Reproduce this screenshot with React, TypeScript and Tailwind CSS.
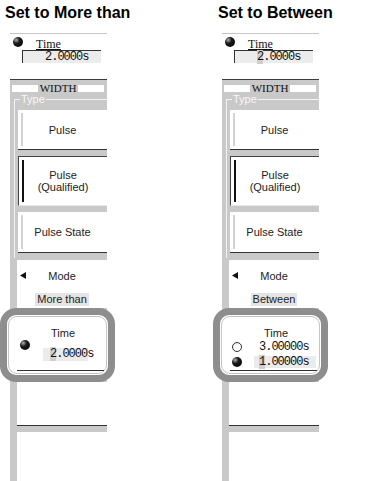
import React from "react";

type Side = "more" | "between";

const mono =
  "font-['Liberation_Mono',monospace] text-[12px] tracking-[-1px] text-[#111]";

function Knob({ className = "" }: { className?: string }) {
  return (
    <div
      className={
        "w-[10px] h-[10px] shrink-0 rounded-full bg-[radial-gradient(circle_at_32%_30%,#b0b0b0_0,#1a1a1a_35%,#000_100%)] " +
        className
      }
    />
  );
}

function Radio({ className = "" }: { className?: string }) {
  return (
    <div
      className={
        "w-[10px] h-[10px] shrink-0 rounded-full border border-[#333] bg-[radial-gradient(circle_at_60%_65%,#fff_0,#fff_45%,#d8d8d8_100%)] " +
        className
      }
    />
  );
}

function TypeButton({
  label,
  selected = false,
  h,
}: {
  label: React.ReactNode;
  selected?: boolean;
  h: string;
}) {
  return (
    <div
      className={
        "flex items-stretch bg-white " +
        h +
        (selected
          ? " border-t border-l border-[#444] border-b border-b-[#e8e8e8]"
          : " border-b border-[#333]")
      }
    >
      <div
        className={
          "ml-[3px] my-[3px] w-[2px] " + (selected ? "bg-[#111]" : "bg-[#d2d2d2]")
        }
      />
      <div className="flex-1 mr-[5px] flex items-center justify-center text-center text-[11px] leading-[12px] text-[#222]">
        {label}
      </div>
    </div>
  );
}

function Panel({ side }: { side: Side }) {
  const between = side === "between";
  return (
    <div className="w-[97px] font-['Liberation_Sans',sans-serif]">
      {/* top readout */}
      <div className="h-px bg-[#c6c6c6]" />
      <div className="h-[45px] bg-white">
        <div className="flex items-start">
          <Knob className="ml-[3px] mt-[3px]" />
          <span className="ml-[13px] mt-[4px] font-['Liberation_Serif',serif] text-[12px] leading-[12px] text-[#111] underline underline-offset-[1px]">
            Time
          </span>
        </div>
        <div
          className={
            "ml-[12px] w-[79px] h-[13px] border-t border-l border-[#333] bg-[#ececec] pl-[22px] leading-[12px] whitespace-nowrap " +
            mono
          }
        >
          {between ? (
            <>
              <span className="bg-[#cfcfcf]">2</span>.0000s
            </>
          ) : (
            "2.0000s"
          )}
        </div>
      </div>
      <div className="h-px bg-[#3c3c3c]" />

      {/* gray body */}
      <div className="bg-[#c9c9c9]">
        <div className="flex items-center pl-[2px] pr-[3px] pt-[4px]">
          <div className="flex-1 h-[7px] bg-white" />
          <span className="mx-[2px] font-['Liberation_Serif',serif] text-[11px] leading-[9px] text-[#111]">
            WIDTH
          </span>
          <div className="flex-1 h-[7px] bg-white" />
        </div>

        <div className="ml-[4px] mt-[6px] border-l border-t border-[#f3f3f3] pb-[5px]">
          <div className="-mt-[7px] ml-[5px] w-fit px-[1px] bg-[#c9c9c9] text-[11px] leading-[12px] text-[#f7f7f7]">
            Type
          </div>
          <div className="pl-[3px] pt-[5px] flex flex-col gap-[6px]">
            <TypeButton label="Pulse" h="h-[40px]" />
            <TypeButton
              label={
                <span>
                  Pulse
                  <br />
                  (Qualified)
                </span>
              }
              selected
              h="h-[50px]"
            />
            <TypeButton label="Pulse State" h="h-[41px]" />
          </div>
        </div>

        <div className="ml-[7px] mt-[2px] bg-white pt-[10px] pb-[2px]">
          <div className="flex items-center h-[12px]">
            <svg width="6" height="7" viewBox="0 0 6 7" className="ml-[3px] -mt-[2px]">
              <path d="M0 3.5 L6 0 L6 7 Z" fill="#111" />
            </svg>
            <span className="flex-1 text-center mr-[9px] text-[11px] leading-[12px] text-[#222]">
              Mode
            </span>
          </div>
          <div className="mt-[11px] mx-auto w-fit px-[2px] h-[13px] bg-[#e4e4e4] text-[11px] leading-[13px] text-[#222]">
            {between ? "Between" : "More than"}
          </div>
        </div>

        {/* highlighted Time setting */}
        <div
          className={
            "w-[115px] h-[74px] border-[7px] border-[#8e8e8e] rounded-[16px] bg-white p-[1px] " +
            (between ? "-ml-[9px]" : "-ml-[10px]")
          }
        >
          <div className="h-full rounded-[9px] border border-[#c4c4c4] bg-white">
            <div className="pt-[10px] ml-[42px] text-[11px] leading-[12px] text-[#222]">
              Time
            </div>
            {between ? (
              <>
                <div className="flex items-center h-[15px]">
                  <Radio className="ml-[10px]" />
                  <div className={"ml-[12px] w-[62px] h-[12px] pl-[5px] leading-[12px] whitespace-nowrap " + mono}>
                    3.00000s
                  </div>
                </div>
                <div className="flex items-center h-[15px]">
                  <Knob className="ml-[10px]" />
                  <div className={"ml-[12px] w-[62px] h-[12px] pl-[5px] bg-[#ebebeb] leading-[12px] whitespace-nowrap " + mono}>
                    <span className="bg-[#cfcfcf]">1</span>.00000s
                  </div>
                </div>
                <div className="mt-[1px] ml-[8px] mr-[2px] h-px bg-[#333]" />
              </>
            ) : (
              <>
                <div className="flex items-start">
                  <Knob className="ml-[11px] mt-[1px]" />
                  <div className={"ml-[13px] mt-[9px] w-[45px] h-[13px] bg-[#ebebeb] pl-[7px] leading-[13px] whitespace-nowrap " + mono}>
                    <span className="bg-[#cfcfcf]">2</span>.0000s
                  </div>
                </div>
                <div className="mt-[9px] ml-[8px] mr-[2px] h-px bg-[#333]" />
              </>
            )}
          </div>
        </div>

        <div className="ml-[7px] h-[44px] bg-white border-b border-[#333]" />
        <div className="h-[6px]" />
        <div className="ml-[7px] h-[49px] bg-white" />
      </div>
    </div>
  );
}

export default function App() {
  return (
    <div className="w-[374px] h-[481px] bg-white overflow-hidden flex">
      <div className="w-[187px] shrink-0">
        <div className="pl-[5px] pt-[5px] h-[26px] font-['Liberation_Sans',sans-serif] font-bold text-[16px] leading-[16px] text-black whitespace-nowrap">
          Set to More than
        </div>
        <div className="ml-[10px] mt-[7px]">
          <Panel side="more" />
        </div>
      </div>
      <div className="w-[187px] shrink-0">
        <div className="pl-[31px] pt-[5px] h-[26px] font-['Liberation_Sans',sans-serif] font-bold text-[16px] leading-[16px] text-black whitespace-nowrap">
          Set to Between
        </div>
        <div className="ml-[35px] mt-[7px]">
          <Panel side="between" />
        </div>
      </div>
    </div>
  );
}
